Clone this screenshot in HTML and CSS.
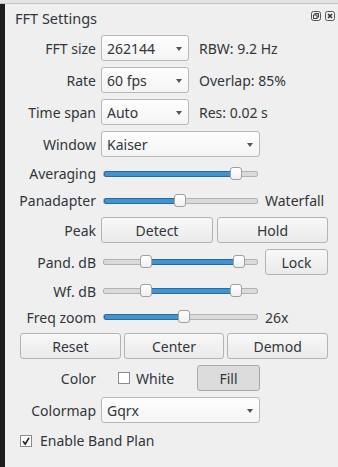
FILE: index.html
```html
<!DOCTYPE html>
<html lang="en">
<head>
  <meta charset="UTF-8">
  <title>FFT Settings</title>
  <link rel="stylesheet" href="styles.css">
</head>
<body>
  <div class="topline"></div>
  <div class="frame">
    <div class="strip"></div>
    <div class="dock">
      <div class="dock-title">
        <span>FFT Settings</span>
        <div class="dock-buttons">
          <svg width="10" height="10" viewBox="0 0 10 10">
            <rect x="0.5" y="0.5" width="9" height="9" rx="2" fill="none" stroke="#555"/>
            <rect x="4" y="2.5" width="3.5" height="3.5" fill="none" stroke="#444"/>
            <rect x="2.5" y="4" width="3.5" height="3.5" fill="#efefef" stroke="#444"/>
          </svg>
          <svg width="10" height="10" viewBox="0 0 10 10">
            <rect x="0.5" y="0.5" width="9" height="9" rx="2" fill="none" stroke="#555"/>
            <path d="M3 3 L7 7 M7 3 L3 7" stroke="#333" stroke-width="1.6"/>
          </svg>
        </div>
      </div>

      <div class="form">
        <div class="label">FFT size</div>
        <div class="pair">
          <div class="combo short">262144<span class="arrow"></span></div>
          <span class="info">RBW: 9.2 Hz</span>
        </div>

        <div class="label">Rate</div>
        <div class="pair">
          <div class="combo short">60 fps<span class="arrow"></span></div>
          <span class="info">Overlap: 85%</span>
        </div>

        <div class="label">Time span</div>
        <div class="pair">
          <div class="combo short">Auto<span class="arrow"></span></div>
          <span class="info">Res: 0.02 s</span>
        </div>

        <div class="label">Window</div>
        <div class="combo">Kaiser<span class="arrow"></span></div>
        <div></div>

        <div class="label">Averaging</div>
        <div class="slider">
          <div class="groove">
            <div class="fill" style="left:0;width:132px"></div>
            <div class="handle" style="left:126px"></div>
          </div>
        </div>
        <div></div>

        <div class="label">Panadapter</div>
        <div class="slider">
          <div class="groove">
            <div class="fill" style="left:0;width:76px"></div>
            <div class="handle" style="left:70px"></div>
          </div>
        </div>
        <div class="side">Waterfall</div>

        <div class="label">Peak</div>
        <div class="pair2">
          <div class="btn">Detect</div>
          <div class="btn">Hold</div>
        </div>

        <div class="label">Pand. dB</div>
        <div class="slider">
          <div class="groove">
            <div class="fill" style="left:42px;width:92px"></div>
            <div class="handle" style="left:36px"></div>
            <div class="handle" style="left:129px"></div>
          </div>
        </div>
        <div class="btn">Lock</div>

        <div class="label">Wf. dB</div>
        <div class="slider">
          <div class="groove">
            <div class="fill" style="left:42px;width:88px"></div>
            <div class="handle" style="left:36px"></div>
            <div class="handle" style="left:126px"></div>
          </div>
        </div>
        <div></div>

        <div class="label">Freq zoom</div>
        <div class="slider">
          <div class="groove">
            <div class="fill" style="left:0;width:80px"></div>
            <div class="handle" style="left:74px"></div>
          </div>
        </div>
        <div class="side">26x</div>

        <div class="triple">
          <div class="btn">Reset</div>
          <div class="btn">Center</div>
          <div class="btn">Demod</div>
        </div>

        <div class="label">Color</div>
        <div class="color-row">
          <label class="check"><span class="box"></span>White</label>
          <div class="btn pressed">Fill</div>
        </div>
        <div></div>

        <div class="label">Colormap</div>
        <div class="combo">Gqrx<span class="arrow"></span></div>
        <div></div>

        <div class="bandplan">
          <label class="check">
            <span class="box">
              <svg width="10" height="10" viewBox="0 0 10 10"><path d="M2 5.2 L4.2 8 L8 1.8" fill="none" stroke="#222" stroke-width="1.6"/></svg>
            </span>Enable Band Plan
          </label>
        </div>
      </div>
    </div>
  </div>
</body>
</html>
```

FILE: styles.css
```css
body {
  margin: 0;
  background: #efefef;
  font-family: 'Noto Sans', 'Open Sans', sans-serif;
  font-size: 14px;
  color: #31363b;
  width: 338px;
  height: 467px;
  overflow: hidden;
}
.topline {
  height: 3px;
  background: #e4e4e4;
  border-bottom: 1px solid #c6c6c6;
}
.frame {
  display: flex;
  height: 463px;
}
.strip {
  width: 5px;
  background: #1d1d1d;
}
.dock {
  flex: 1;
  padding: 0 10px 0 15px;
}
.dock-title {
  height: 31px;
  display: flex;
  align-items: center;
  justify-content: space-between;
  margin-left: -5px;
  margin-right: -7px;
  font-size: 14.5px;
  padding-bottom: 3px;
  box-sizing: border-box;
}
.dock-buttons {
  display: flex;
  gap: 4px;
  align-self: flex-start;
  margin-top: 7px;
}
.form {
  display: grid;
  grid-template-columns: 76px 159px 63px;
  grid-template-rows: 26px 26px 26px 26px 21px 21px 26px 26px 20px 20px 26px 26px 26px 23px;
  column-gap: 5px;
  row-gap: 6px;
}
.label {
  display: flex;
  align-items: center;
  justify-content: flex-end;
  white-space: nowrap;
}
.pair {
  grid-column: 2 / 4;
  display: flex;
  align-items: center;
  gap: 10px;
}
.info {
  white-space: nowrap;
}
.combo {
  position: relative;
  height: 26px;
  box-sizing: border-box;
  border: 1px solid #b8b8b8;
  border-radius: 3px;
  background: linear-gradient(#fefefe, #f4f4f4);
  padding-left: 5px;
  display: flex;
  align-items: center;
}
.combo.short {
  width: 88px;
}
.arrow {
  position: absolute;
  right: 6px;
  top: 11px;
  border-top: 4px solid #555;
  border-left: 3.5px solid transparent;
  border-right: 3.5px solid transparent;
}
.slider {
  display: flex;
  align-items: center;
  padding: 0 2px;
}
.groove {
  position: relative;
  width: 100%;
  height: 4px;
  border: 1px solid #b2b2b2;
  border-radius: 2px;
  background: #dadada;
}
.fill {
  position: absolute;
  top: -1px;
  height: 4px;
  border: 1px solid #2a6a9e;
  border-radius: 2px;
  background: #3d95d3;
}
.handle {
  position: absolute;
  top: -5px;
  width: 12px;
  height: 13px;
  box-sizing: border-box;
  border: 1px solid #a0a0a0;
  border-radius: 3px;
  background: linear-gradient(#ffffff, #f0f0f0);
}
.side {
  display: flex;
  align-items: center;
  white-space: nowrap;
}
.btn {
  display: flex;
  align-items: center;
  justify-content: center;
  box-sizing: border-box;
  border: 1px solid #b4b4b4;
  border-radius: 3px;
  background: linear-gradient(#f8f8f8, #eaeaea);
}
.btn.pressed {
  background: #dcdcdc;
  border-color: #a8a8a8;
}
.pair2 {
  grid-column: 2 / 4;
  display: grid;
  grid-template-columns: 112px 1fr;
  gap: 4px;
}
.triple {
  grid-column: 1 / 4;
  display: grid;
  grid-template-columns: 1fr 1fr 1fr;
  gap: 3px;
}
.color-row {
  display: flex;
  align-items: center;
  justify-content: space-between;
  padding-left: 17px;
}
.color-row .btn {
  width: 63px;
  height: 26px;
}
.check {
  display: flex;
  align-items: center;
  gap: 6px;
}
.box {
  width: 12px;
  height: 12px;
  box-sizing: border-box;
  border: 1px solid #8c8c8c;
  background: #ffffff;
  display: flex;
  align-items: center;
  justify-content: center;
}
.bandplan {
  grid-column: 1 / 4;
  display: flex;
  align-items: center;
}
.bandplan .check {
  gap: 8px;
}
```
